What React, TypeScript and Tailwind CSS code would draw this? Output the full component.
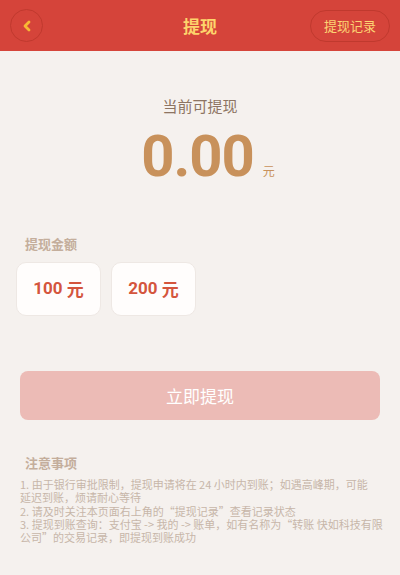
import React from 'react';

const cjk = { fontFamily: '"Noto Sans CJK SC", "Noto Sans", sans-serif' };
const num = { fontFamily: 'Roboto, "Noto Sans CJK SC", sans-serif' };

const amounts = [100, 200];

const notes = [
  ['1. 由于银行审批限制，提现申请将在 24 小时内到账；如遇高峰期，可能', '延迟到账，烦请耐心等待'],
  ['2. 请及时关注本页面右上角的“提现记录”查看记录状态'],
  ['3. 提现到账查询：支付宝 -> 我的 -> 账单，如有名称为“转账 快如科技有限', '公司”的交易记录，即提现到账成功'],
];

export default function App() {
  return (
    <div className="w-[400px] h-[575px] bg-[#f5f1ee] overflow-hidden" style={cjk}>
      <div className="h-[51px] bg-[#d5443a] grid grid-cols-[90px_1fr_90px] items-center px-[10px]">
        <button className="w-[33px] h-[33px] rounded-full border border-[#c0392e] flex items-center justify-center">
          <svg width="10" height="12" viewBox="0 0 10 12" fill="none">
            <path d="M7 2 L3 6 L7 10" stroke="#f8b934" strokeWidth="2.8" strokeLinecap="round" strokeLinejoin="round" />
          </svg>
        </button>
        <div className="text-center text-[17px] font-bold text-[#fdd46c]">提现</div>
        <div className="flex justify-end">
          <button className="h-[32px] w-[80px] rounded-full border border-[#c0392e] text-[13px] text-[#fcd373]">
            提现记录
          </button>
        </div>
      </div>

      <div className="pt-[44px] text-center text-[15px] leading-[22px] text-[#8d7462]">当前可提现</div>
      <div className="mt-[10px] flex items-baseline justify-center">
        <span className="text-[58px] leading-none font-bold tracking-[-1px] text-[#c8915b] ml-[16px]" style={num}>0.00</span>
        <span className="ml-[9px] text-[12px] text-[#c8915b]">元</span>
      </div>

      <div className="mt-[50px] px-[25px] text-[13px] leading-[18px] font-bold text-[#c4ae9c]">提现金额</div>
      <div className="mt-[9px] px-[16px] flex gap-[10px]">
        {amounts.map((a) => (
          <div
            key={a}
            className="w-[85px] h-[54px] rounded-[10px] bg-[#fffdfc] border border-[#eee8e4] flex items-center justify-center text-[17px] font-bold text-[#d4553d]"
          >
            <span style={num}>{a}</span>
            <span className="ml-[4px]">元</span>
          </div>
        ))}
      </div>

      <div className="mt-[55px] mx-[20px] h-[49px] rounded-[8px] bg-[#ecbbb6] flex items-center justify-center text-[17px] text-white">
        立即提现
      </div>

      <div className="mt-[34px] px-[25px] text-[13px] leading-[18px] font-bold text-[#c4ae9c]">注意事项</div>
      <div className="mt-[6px] px-[20px] text-[11px] leading-[13.3px] text-[#c7b6a9]">
        {notes.map((lines, i) => (
          <div key={i}>
            {lines.map((l, j) => (
              <div key={j} className="whitespace-nowrap">{l}</div>
            ))}
          </div>
        ))}
      </div>
    </div>
  );
}
